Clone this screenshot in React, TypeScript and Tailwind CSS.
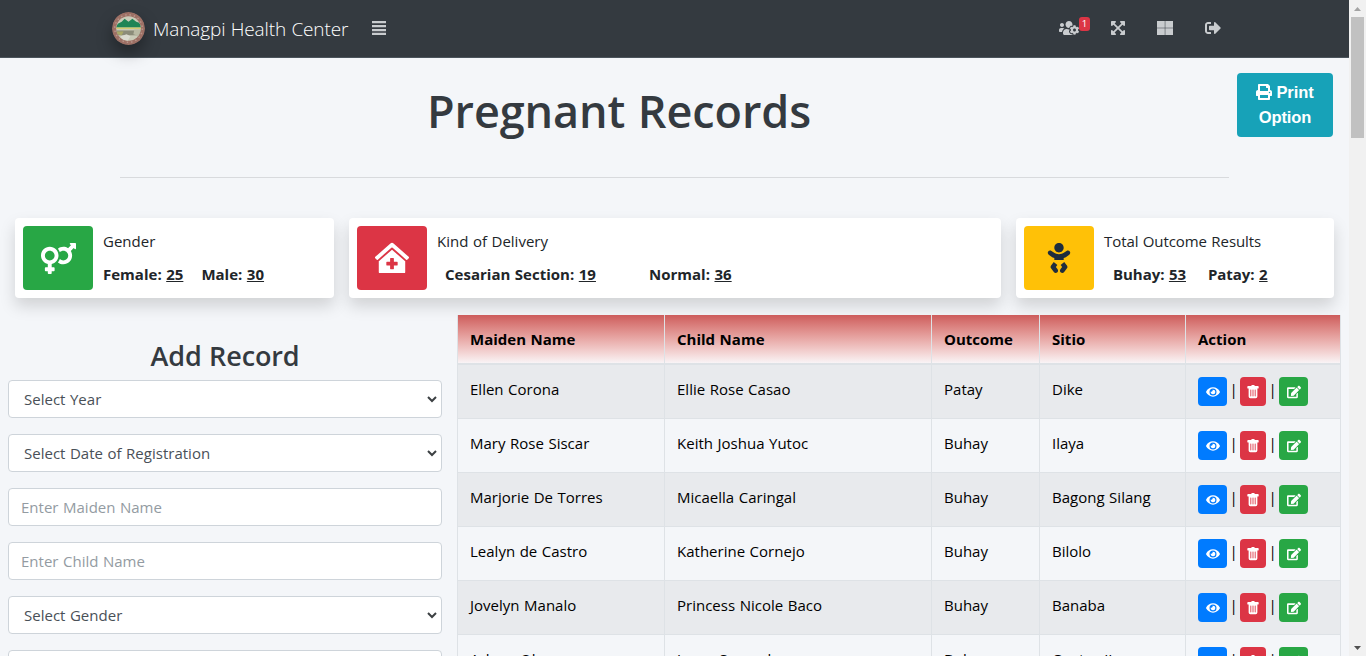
import React from 'react';
import { FaUsersCog, FaSignOutAlt, FaVenusMars, FaEye, FaEdit, FaBaby, FaPrint, FaClinicMedical, FaExpandArrowsAlt } from 'react-icons/fa';
import { BsTrashFill } from 'react-icons/bs';

const rows = [
  ['Ellen Corona', 'Ellie Rose Casao', 'Patay', 'Dike'],
  ['Mary Rose Siscar', 'Keith Joshua Yutoc', 'Buhay', 'Ilaya'],
  ['Marjorie De Torres', 'Micaella Caringal', 'Buhay', 'Bagong Silang'],
  ['Lealyn de Castro', 'Katherine Cornejo', 'Buhay', 'Bilolo'],
  ['Jovelyn Manalo', 'Princess Nicole Baco', 'Buhay', 'Banaba'],
  ['Arleen Oban', 'Jason Samuel', 'Buhay', 'Centro II'],
];

function Seal() {
  return (
    <svg viewBox="0 0 34 34" className="h-[33px] w-[33px] rounded-full shadow-[0_8px_16px_rgba(0,0,0,0.35)]">
      <circle cx="17" cy="17" r="17" fill="#9d7065" />
      <circle cx="17" cy="17" r="14.2" fill="none" stroke="#b8958a" strokeWidth="1.5" strokeDasharray="1.5 3" />
      <clipPath id="seal-inner"><circle cx="17" cy="17" r="12.6" /></clipPath>
      <g clipPath="url(#seal-inner)">
        <rect width="34" height="34" fill="#c9cbb8" />
        <path d="M4 16 L6 12 L10 10 L13 7 L17 10 L21 7 L25 10 L28 11 L31 16 Z" fill="#1f8556" />
        <rect x="4" y="16" width="27" height="1.5" fill="#d2cc72" />
        <rect x="4" y="19" width="27" height="5" fill="#8b8c79" />
        <path d="M5 20 L12 20 L10 24 L5 23 Z" fill="#a9a968" />
        <path d="M9 25 L15 23 L19 25 L16 30 L10 28 Z" fill="#dadbd0" />
        <path d="M23 18 L30 18 L28 25 L22 23 Z" fill="#b9baa4" />
      </g>
    </svg>
  );
}

function Select({ label }: { label: string }) {
  return (
    <div className="flex h-[38px] shrink-0 items-center justify-between rounded border border-[#ced4da] bg-white pr-[4px] pl-[15px] text-[#495057]">
      <span>{label}</span>
      <svg width="10" height="7" viewBox="0 0 10 7" fill="none" stroke="#3c4043" strokeWidth="2"><path d="M1 1 L5 5 L9 1" /></svg>
    </div>
  );
}

function Input({ label }: { label: string }) {
  return <div className="flex h-[38px] shrink-0 items-center rounded border border-[#ced4da] bg-white px-3 text-[#939ba2]">{label}</div>;
}

const card = 'flex h-20 rounded bg-white p-2 shadow-[0_8px_16px_rgba(0,0,0,0.15)]';

export default function App() {
  return (
    <div className="flex h-[656px] w-[1366px] overflow-hidden bg-[#f4f6f9] font-['Open_Sans',sans-serif] text-[15px] leading-6 tracking-[0.01px] text-[#212529] [word-spacing:0.6px]">
      <div className="flex w-[1349px] flex-col">
        <header className="flex h-[58px] shrink-0 items-center border-b border-[#4b545c] bg-[#343a40] pb-px pl-[112px] text-[#c9cccf]">
          <Seal />
          <span className="ml-[8px] w-[218px] pt-[2px] text-[19px] font-light tracking-[-0.13px] text-white">Managpi Health Center</span>
          <svg className="h-4 w-4" viewBox="0 0 16 16" fill="currentColor">
            <path d="M1 1h14v2.2H1zM1 5h14v2.2H1zM1 9h14v2.2H1zM1 12.8h14v2.2H1z" />
          </svg>
          <span className="relative ml-[672px]">
            <FaUsersCog className="h-4 w-5" />
            <span className="absolute top-[-3px] left-[20px] flex h-[14px] w-[11px] items-center justify-center rounded-[3px] bg-[#dc3545] text-[9.6px] text-white">1</span>
          </span>
          <FaExpandArrowsAlt className="ml-[31px] h-4 w-4" />
          <svg className="ml-[31px] h-4 w-4" viewBox="0 0 16 16" fill="currentColor">
            <path d="M0 1h7.8v6.8H0zM8.3 1H16v6.8H8.3zM0 8.3h7.8V15H0zM8.3 8.3H16V15H8.3z" />
          </svg>
          <FaSignOutAlt className="ml-[32px] h-4 w-4" />
        </header>

        <section className="flex h-[119px] shrink-0 justify-between">
          <h1 className="ml-[427px] pt-[24px] text-[45px] leading-[58px] font-semibold tracking-[-0.1px] text-[#343a40] [word-spacing:1px]">Pregnant Records</h1>
          <button className="mt-[15px] mr-4 h-16 w-24 rounded bg-[#17a2b8] font-['Liberation_Sans',sans-serif] text-[16.5px] leading-[25px] font-bold tracking-[-0.1px] text-white">
            <FaPrint className="mr-1 inline h-4 w-4 align-[-2px]" />Print<br />Option
          </button>
        </section>
        <hr className="mr-[120px] ml-[120px] shrink-0 border-[#d8dadd]" />

        <section className="mt-10 flex shrink-0 gap-[15px] pl-[15px]">
          <div className={card + ' w-[319px]'}>
            <div className="flex w-[70px] items-center justify-center rounded bg-[#28a745] text-white"><FaVenusMars size={35} /></div>
            <div className="pl-[10px]">
              <p className="mt-[3px]">Gender</p>
              <p className="mt-[9px] flex gap-[18px] font-bold"><span>Female: <u>25</u></span><span>Male: <u>30</u></span></p>
            </div>
          </div>
          <div className={card + ' w-[652px]'}>
            <div className="flex w-[70px] items-center justify-center rounded bg-[#dc3545] text-white"><FaClinicMedical size={34} /></div>
            <div className="pl-[10px]">
              <p className="mt-[3px]">Kind of Delivery</p>
              <p className="mt-[9px] ml-2 flex gap-[53px] font-bold"><span>Cesarian Section: <u>19</u></span><span>Normal: <u>36</u></span></p>
            </div>
          </div>
          <div className={card + ' w-[318px]'}>
            <div className="flex w-[70px] items-center justify-center rounded bg-[#ffc107] text-[#1f2d3d]"><FaBaby size={30} /></div>
            <div className="pl-[10px]">
              <p className="mt-[3px] tracking-[-0.08px]">Total Outcome Results</p>
              <p className="mt-[9px] ml-[9px] flex gap-[22px] font-bold tracking-[-0.04px]"><span>Buhay: <u>53</u></span><span>Patay: <u>2</u></span></p>
            </div>
          </div>
        </section>

        <section className="flex pt-[17px]">
          <div className="ml-2 flex w-[434px] flex-col gap-4">
            <h2 className="mt-[24px] -mb-2 text-center text-[27px] leading-[33px] font-semibold tracking-[-0.13px] text-[#343a40]">Add Record</h2>
            <Select label="Select Year" />
            <Select label="Select Date of Registration" />
            <Input label="Enter Maiden Name" />
            <Input label="Enter Child Name" />
            <Select label="Select Gender" />
            <Input label="" />
          </div>
          <div className="ml-[15px] h-[341px] w-[884px] overflow-hidden text-black">
            <div className="grid h-[50px] grid-cols-[207px_267px_108px_146px_155px] border-b-2 border-l border-[#dee2e6] bg-linear-to-b from-[#cd5c5c] to-[#f9f4f6] bg-no-repeat font-bold">
              {['Maiden Name', 'Child Name', 'Outcome', 'Sitio', 'Action'].map((h) => (
                <div key={h} className="border-r border-[#dee2e6] pt-[12px] pl-3">{h}</div>
              ))}
            </div>
            {rows.map((r, i) => (
              <div key={r[0]} className={'grid h-[54px] w-[884px] grid-cols-[207px_267px_108px_146px_155px] border-b border-l border-[#dee2e6] ' + (i % 2 ? '' : 'bg-[#e8eaed]')}>
                {r.map((c, j) => <div key={j} className="border-r border-[#dee2e6] pt-[12px] pl-3">{c}</div>)}
                <div className="flex items-start border-r border-[#dee2e6] pt-[12px] pl-3 text-white">
                  <span className="flex h-[29px] w-[29px] items-center justify-center rounded bg-[#007bff]"><FaEye size={14} /></span>
                  <span className="w-[13px] text-center text-black">|</span>
                  <span className="flex h-[29px] w-[26px] items-center justify-center rounded bg-[#dc3545]"><BsTrashFill size={14} /></span>
                  <span className="w-[13px] text-center text-black">|</span>
                  <span className="flex h-[29px] w-[29px] items-center justify-center rounded bg-[#28a745]"><FaEdit size={14} /></span>
                </div>
              </div>
            ))}
          </div>
        </section>
      </div>
      <aside className="flex w-[17px] flex-col items-center bg-[#f1f1f1]">
        <svg width="17" height="17" viewBox="0 0 17 17"><path d="M5 11 L8.5 7 L12 11Z" fill="#a3a3a3" /></svg>
        <div className="h-[121px] w-[13px] bg-[#c1c1c1]" />
        <svg className="mt-auto" width="17" height="17" viewBox="0 0 17 17"><path d="M5 7 L8.5 11 L12 7Z" fill="#505050" /></svg>
      </aside>
    </div>
  );
}
